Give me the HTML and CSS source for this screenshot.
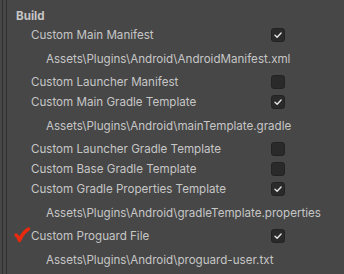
FILE: index.html
```html
<!DOCTYPE html>
<html lang="en">
<head>
  <meta charset="UTF-8">
  <title>Build settings</title>
  <link rel="stylesheet" href="styles.css">
</head>
<body>
  <div class="rail">
    <div class="panel">
      <div class="header">Build</div>

      <div class="row">
        <span class="label">Custom Main Manifest</span>
        <span class="box on"><svg viewBox="0 0 14 14"><path d="M3.5 7.2 L6 9.6 L10.6 4.6"/></svg></span>
      </div>
      <div class="path">Assets\Plugins\Android\AndroidManifest.xml</div>

      <div class="row">
        <span class="label">Custom Launcher Manifest</span>
        <span class="box"></span>
      </div>

      <div class="row">
        <span class="label">Custom Main Gradle Template</span>
        <span class="box on"><svg viewBox="0 0 14 14"><path d="M3.5 7.2 L6 9.6 L10.6 4.6"/></svg></span>
      </div>
      <div class="path">Assets\Plugins\Android\mainTemplate.gradle</div>

      <div class="row">
        <span class="label">Custom Launcher Gradle Template</span>
        <span class="box"></span>
      </div>

      <div class="row">
        <span class="label">Custom Base Gradle Template</span>
        <span class="box"></span>
      </div>

      <div class="row">
        <span class="label">Custom Gradle Properties Template</span>
        <span class="box on"><svg viewBox="0 0 14 14"><path d="M3.5 7.2 L6 9.6 L10.6 4.6"/></svg></span>
      </div>
      <div class="path">Assets\Plugins\Android\gradleTemplate.properties</div>

      <div class="row">
        <svg class="mark" viewBox="0 0 18 18"><path d="M3 9 C4.5 9.8 5.5 11.5 6.5 14.5 C8.5 9.5 11.5 5.5 15.5 3"/></svg>
        <span class="label">Custom Proguard File</span>
        <span class="box on"><svg viewBox="0 0 14 14"><path d="M3.5 7.2 L6 9.6 L10.6 4.6"/></svg></span>
      </div>
      <div class="path">Assets\Plugins\Android\proguard-user.txt</div>
    </div>
  </div>
</body>
</html>
```

FILE: styles.css
```css
html, body { margin: 0; height: 100%; }
body {
  background: #474747;
  font-family: Inter, "Noto Sans", sans-serif;
  font-size: 11.6px;
  color: #c6c6c6;
  overflow: hidden;
}

.rail { height: 100%; margin-left: 2px; border-left: 1px solid #2f2f2f; padding-left: 3px; }
.panel { height: 100%; border-left: 1px solid #2f2f2f; padding-left: 8px; padding-top: 7px; }

.header { height: 18px; line-height: 18px; font-weight: bold; padding-left: 1px; }

.row { position: relative; display: flex; align-items: center; height: 20px; padding-left: 16px; }
.label { flex: 0 0 240px; white-space: nowrap; }

.path { height: 20px; line-height: 20px; margin: 4px 0 3px; padding-left: 31px; white-space: nowrap; }

.box {
  width: 12px; height: 12px;
  border: 1px solid #222;
  border-radius: 3px;
  background: #2a2a2a;
  display: flex;
}
.box svg { width: 12px; height: 12px; }
.box path { fill: none; stroke: #e6e6e6; stroke-width: 1.6; stroke-linecap: round; stroke-linejoin: round; }

.mark { position: absolute; left: -2px; top: 0; width: 18px; height: 18px; }
.mark path { fill: none; stroke: #ea2a0e; stroke-width: 3.4; stroke-linecap: round; stroke-linejoin: round; }
```
